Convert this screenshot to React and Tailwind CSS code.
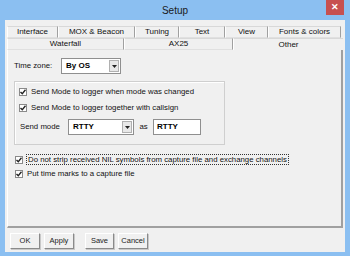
import React from "react";

const F = { fontFamily: '"Liberation Sans", Arial, sans-serif' };

function Check() {
  return (
    <span className="inline-flex w-[8px] h-[8px] border border-[#8a8a8a] bg-white items-center justify-center shrink-0">
      <svg width="6" height="6" viewBox="0 0 6 6">
        <path d="M0.5 3 L2.3 4.8 L5.5 0.8" stroke="#222" strokeWidth="1.4" fill="none" />
      </svg>
    </span>
  );
}

function Select({ value, w }) {
  return (
    <div className={`flex h-[16px] ${w} border border-[#8f8f8f] bg-white items-center`}>
      <span className="flex-1 pl-[4px] text-[8px] font-bold text-black leading-none">{value}</span>
      <span className="w-[10px] h-[12px] mr-[1px] bg-[#e8e8e8] border border-[#b0b0b0] flex items-center justify-center">
        <svg width="5" height="3" viewBox="0 0 5 3"><path d="M0 0 H5 L2.5 3 Z" fill="#222" /></svg>
      </span>
    </div>
  );
}

function Tab({ w, label, selected, last }) {
  return (
    <div
      className={`${w} h-full flex items-center justify-center text-[8px] text-[#111] border-t border-l border-t-[#d8d8d8] border-l-white ${
        last ? "" : "border-r border-r-[#a0a0a0]"
      } ${selected ? "bg-[#f0f0f0]" : "border-b border-b-[#e0e0e0]"}`}
    >
      {label}
    </div>
  );
}

function Btn({ label, w }) {
  return (
    <div className={`${w} h-[16px] flex items-center justify-center text-[7.5px] text-[#222] bg-[#f0f0f0] border border-t-white border-l-white border-r-[#8a8a8a] border-b-[#8a8a8a] shadow-[1px_1px_0_#c8c8c8]`}>
      {label}
    </div>
  );
}

export default function App() {
  return (
    <div style={F} className="w-[350px] h-[256px] bg-[#8bbff1] flex flex-col overflow-hidden">
      <div className="h-[20px] relative flex items-center justify-center shrink-0">
        <span className="text-[10px] text-[#1a1a1a]">Setup</span>
        <div className="absolute right-[6px] top-0 w-[18px] h-[15px] bg-[#c75050] flex items-center justify-center">
          <span className="text-white text-[9px] font-bold leading-none">✕</span>
        </div>
      </div>
      <div className="flex-1 mx-[5px] mb-[4px] bg-[#f0f0f0] flex flex-col">
        <div className="pt-[6px] pl-[2px]">
          <div className="flex h-[12px]">
            <Tab w="w-[51px]" label="Interface" />
            <Tab w="w-[77px]" label="MOX & Beacon" />
            <Tab w="w-[44px]" label="Tuning" />
            <Tab w="w-[46px]" label="Text" />
            <Tab w="w-[43px]" label="View" />
            <Tab w="w-[73px]" label="Fonts & colors" />
          </div>
          <div className="flex h-[12px]">
            <Tab w="w-[117px]" label="Waterfall" />
            <Tab w="w-[109px]" label="AX25" />
            <Tab w="w-[110px]" label="Other" selected last />
          </div>
          <div className="w-[336px] h-[178px] border-l border-l-white border-r-2 border-r-[#a0a0a0] border-b-2 border-b-[#a0a0a0] pl-[6px] pt-[8px] text-[7.8px] text-[#111]">
            <div className="flex items-center h-[16px]">
              <span className="w-[47px]">Time zone:</span>
              <Select value="By OS" w="w-[60px]" />
            </div>
            <div className="mt-[7px] w-[211px] h-[64px] border border-[#cfcfcf] shadow-[inset_1px_1px_0_#fff] pl-[4px] pt-[5px]">
              <div className="flex items-center h-[10px] gap-[4px]">
                <Check />
                <span>Send Mode to logger when mode was changed</span>
              </div>
              <div className="flex items-center h-[10px] gap-[4px] mt-[6px]">
                <Check />
                <span>Send Mode to logger together with callsign</span>
              </div>
              <div className="flex items-center h-[16px] mt-[6px]">
                <span className="w-[49px] pl-[1px]">Send mode</span>
                <Select value="RTTY" w="w-[66px]" />
                <span className="w-[19px] text-center">as</span>
                <div className="w-[48px] h-[16px] border border-[#8f8f8f] bg-white flex items-center pl-[3px] text-[8px] font-bold text-black">RTTY</div>
              </div>
            </div>
            <div className="flex items-center h-[11px] mt-[9px] pl-[1px] gap-[3px]">
              <Check />
              <span className="border border-dotted border-[#333] px-[1px] leading-[9px]">Do not strip received NIL symbols from capture file and exchange channels</span>
            </div>
            <div className="flex items-center h-[10px] mt-[4px] pl-[1px] gap-[4px]">
              <Check />
              <span>Put time marks to a capture file</span>
            </div>
          </div>
        </div>
        <div className="flex pl-[5px] pt-[5px] gap-[4px]">
          <Btn label="OK" w="w-[30px]" />
          <Btn label="Apply" w="w-[30px]" />
          <div className="w-[3px]" />
          <Btn label="Save" w="w-[29px]" />
          <Btn label="Cancel" w="w-[30px]" />
        </div>
      </div>
    </div>
  );
}
